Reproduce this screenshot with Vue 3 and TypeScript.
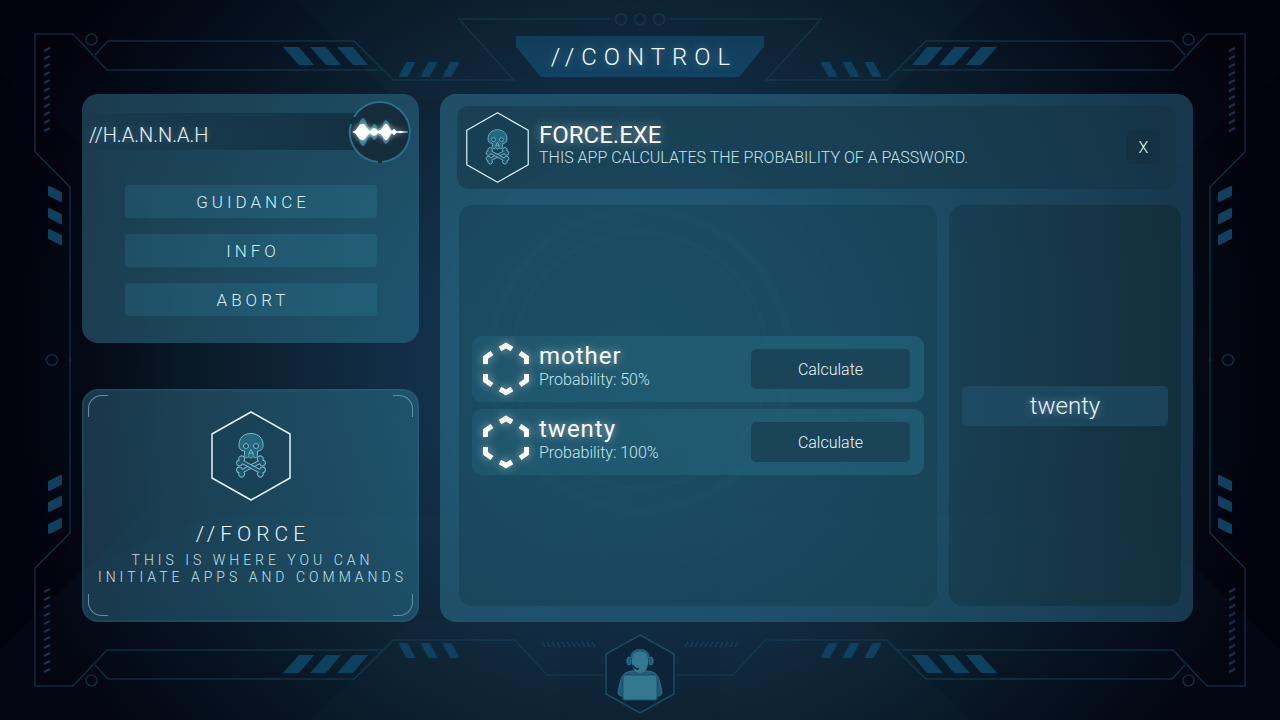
<script setup lang="ts">
import { ref } from 'vue'

interface Guess {
  word: string
  probability: number
}

const menu: string[] = ['GUIDANCE', 'INFO', 'ABORT']
const guesses = ref<Guess[]>([
  { word: 'mother', probability: 50 },
  { word: 'twenty', probability: 100 },
])
const password = ref('twenty')

const corners: string[] = [
  '',
  'translate(1280 0) scale(-1 1)',
  'translate(0 720) scale(1 -1)',
  'translate(1280 720) scale(-1 -1)',
]
const sides: string[] = ['', 'translate(1280 0) scale(-1 1)']
const tickColumns: string[] = [
  'translate(44 48)',
  'translate(1229 48)',
  'translate(44 589)',
  'translate(1229 589)',
]
const segments: string[] = [
  'M18 7 24 3.500 30 7',
  'M38 11 44.500 15.500V22',
  'M44.500 32V38.500L38 43',
  'M30 47 24 50.500 18 47',
  'M10 43 3.500 38.500V32',
  'M3.500 22V15.500L10 11',
]
</script>

<template>
  <div class="screen">
    <svg class="backdrop" viewBox="0 0 1280 720" preserveAspectRatio="none" aria-hidden="true">
      <defs>
        <linearGradient id="fade">
          <stop offset="0" stop-color="#000006" stop-opacity="0.5" />
          <stop offset="1" stop-color="#000006" stop-opacity="0" />
        </linearGradient>
        <symbol id="badge" viewBox="0 0 80 90">
          <path class="badge-edge" d="M40 1 79 23V67L40 89 1 67V23Z" />
          <g class="skull">
            <g transform="translate(40 55.500)">
              <path transform="rotate(-28)" d="M-9-1.600H9A2.900 2.900 0 1 1 13.500 0A2.900 2.900 0 1 1 9 1.600H-9A2.900 2.900 0 1 1-13.500 0A2.900 2.900 0 1 1-9-1.600Z" />
              <path transform="rotate(28)" d="M-9-1.600H9A2.900 2.900 0 1 1 13.500 0A2.900 2.900 0 1 1 9 1.600H-9A2.900 2.900 0 1 1-13.500 0A2.900 2.900 0 1 1-9-1.600Z" />
            </g>
            <path class="head" d="M40 22.500C32 22.500 28 27.500 28 34C28 38 29.500 39.500 33.500 40V44.500C33.500 46 35 47 36.500 46.500L38 45.500 40 47.500 42 45.500 43.500 46.500C45 47 46.500 46 46.500 44.500V40C50.500 39.500 52 38 52 34C52 27.500 48 22.500 40 22.500Z" />
            <circle class="eye" cx="35" cy="35" r="2.500" />
            <circle class="eye" cx="45" cy="35" r="2.500" />
            <path d="M40 38.500 42 42H38ZM38 44.500V42M42 44.500V42" />
          </g>
        </symbol>
        <g id="corner">
          <path class="wire" d="M70 361V187L35 152V34H73L107 70H382M95 55 108 41H354L393 80H430" />
          <circle class="wire" cx="91.500" cy="39.500" r="5.500" />
          <path class="slab" d="M283 47H299L314 65H299ZM310 47H326L341 65H326ZM337 47H353L368 65H353Z" />
          <path class="slab round" d="M407 63H414L407 76H400ZM429 63H436L429 76H422ZM451 63H458L451 76H444Z" />
          <path class="slab round" d="M49 187 61 193V201L49 195ZM49 209 61 215V223L49 217ZM49 230 61 236V244L49 238Z" />
        </g>
      </defs>
      <path class="beam" d="M295 0H985L885 100H395ZM310 720H970L870 620H410Z" />
      <path class="beam" d="M210 516H560V720H0V650L80 570ZM1070 516H720V720H1280V650L1200 570Z" />
      <g v-for="s in sides" :key="s" :transform="s">
        <path fill="url(#fade)" d="M0 73 125 185 180 240V480L140 516 0 650Z" />
        <path class="wire" d="M430 80H514L459 19H610" />
        <path class="wire" d="M430 640H515L547 675H602" />
        <path v-for="n in 11" :key="n" class="tick" :d="`M${537 + n * 5} 642l3 5`" />
      </g>
      <use v-for="c in corners" :key="c" href="#corner" :transform="c" />
      <circle class="wire" cx="52" cy="360" r="5.500" />
      <circle class="wire" cx="1228" cy="360" r="5.500" />
      <circle v-for="x in [621, 640, 659]" :key="x" class="wire" :cx="x" cy="19.500" r="5.500" />
      <g v-for="t in tickColumns" :key="t" :transform="t">
        <path v-for="n in 11" :key="n" class="tick bold" :d="`M0 ${n * 8 - 5}l6 -3`" />
      </g>
    </svg>

    <header class="top">
      <h1>//CONTROL</h1>
    </header>

    <main class="layout">
      <div class="side">
        <section class="panel assistant">
          <div class="assistant-head">
            <h2>//H.A.N.N.A.H</h2>
            <svg class="voice" viewBox="0 0 64 64" aria-hidden="true">
              <circle class="voice-disc" cx="32" cy="32" r="31" />
              <path class="voice-ring" d="M30 62A30 30 0 0 1 3 24M6 17A30 30 0 1 1 34 62" />
              <path class="voice-back" d="M5 32Q9 31 11 24Q15 12 19 24Q22 31 25 25Q27 22 30 29L34 27Q38 13 42 27L44 31Q46 28 48 31H60V33H48Q46 36 44 33L42 37Q38 51 34 37L30 35Q27 42 25 39Q22 33 19 40Q15 52 11 40Q9 33 5 32Z" />
              <path class="voice-wave" d="M4 32Q8 31 10 27Q15 20 19 28L22 31Q26 25 30 31L34 29Q38 19 42 29L44 31Q46 27 48 31L50 31.500Q52 30 55 31.500L60 32L55 32.500Q52 34 50 32.500L48 33Q46 37 44 33L42 35Q38 45 34 35L30 33Q26 39 22 33L19 36Q15 44 10 37Q8 33 4 32Z" />
            </svg>
          </div>
          <nav class="menu" aria-label="Assistant">
            <button v-for="item in menu" :key="item" type="button">{{ item }}</button>
          </nav>
        </section>

        <section class="panel force">
          <i class="bracket tl"></i><i class="bracket tr"></i>
          <i class="bracket bl"></i><i class="bracket br"></i>
          <svg class="force-icon" aria-hidden="true"><use href="#badge" /></svg>
          <h2>//FORCE</h2>
          <p>THIS IS WHERE YOU CAN<br />INITIATE APPS AND COMMANDS</p>
        </section>
      </div>

      <section class="panel app">
        <svg class="rings" viewBox="0 0 753 528" preserveAspectRatio="xMidYMid slice" aria-hidden="true">
          <circle cx="200" cy="266" r="210" class="ring-fill" />
          <circle cx="200" cy="266" r="150" class="ring-line" />
          <circle cx="200" cy="266" r="128" class="ring-line thin" />
        </svg>
        <div class="app-head">
          <svg class="app-icon" aria-hidden="true"><use href="#badge" /></svg>
          <div class="app-title">
            <h2>FORCE.EXE</h2>
            <p>THIS APP CALCULATES THE PROBABILITY OF A PASSWORD.</p>
          </div>
          <button class="close" type="button" aria-label="Close">X</button>
        </div>
        <div class="app-body">
          <ul class="box guesses">
            <li v-for="g in guesses" :key="g.word">
              <svg class="loader" viewBox="0 0 48 54" aria-hidden="true">
                <path v-for="d in segments" :key="d" :d="d" />
              </svg>
              <div class="guess">
                <h3>{{ g.word }}</h3>
                <p>Probability: {{ g.probability }}%</p>
              </div>
              <button type="button">Calculate</button>
            </li>
          </ul>
          <div class="box entry">
            <input v-model="password" type="text" aria-label="Password" />
          </div>
        </div>
      </section>
    </main>

    <footer class="bottom">
      <svg class="operator" viewBox="0 0 70 80" aria-hidden="true">
        <path class="op-edge" d="M35 1 69 20V60L35 79 1 60V20Z" />
        <path class="op-body" d="M27 37H43Q52 38 54 45L57 58Q57 61 54 62H16Q13 61 13 58L16 45Q18 38 27 37Z" />
        <path class="op-face" d="M27 23Q28 17 35 17T43 23V30Q42 39 35 39T27 30Z" />
        <path class="op-band" d="M26 24Q27 16 35 16T44 24" />
        <rect class="op-ear" x="22" y="23" width="4" height="8" rx="2" />
        <rect class="op-ear" x="44" y="23" width="4" height="8" rx="2" />
        <path class="op-mic" d="M28 31Q29 35 34 35" />
        <rect class="op-laptop" x="18" y="41" width="34" height="25" rx="1" />
      </svg>
    </footer>
  </div>
</template>

<style>
body {
  margin: 0;
  background: #02030d;
}
</style>

<style scoped>
.screen {
  position: relative;
  display: flex;
  flex-direction: column;
  min-height: 100vh;
  box-sizing: border-box;
  overflow: hidden;
  color: #e4f6fb;
  font-family: Roboto, 'Liberation Sans', sans-serif;
  font-weight: 300;
  background: radial-gradient(ellipse 52% 84% at 50% 50%, #15405a 0%, #12304a 33%, #0d2030 58%, #050e1c 82%, #02030d 100%);
}
h1, h2, h3, p, ul {
  margin: 0;
  padding: 0;
  font-weight: 300;
}
button, input {
  border: 0;
  padding: 0;
  color: inherit;
  font: inherit;
  box-sizing: border-box;
}
button {
  cursor: pointer;
}
.backdrop {
  position: absolute;
  inset: 0;
  width: 100%;
  height: 100%;
}
.wire {
  fill: none;
  stroke: #153f57;
  stroke-width: 1.5;
  opacity: 0.65;
}
.slab {
  fill: #0e4160;
}
.slab.round {
  stroke: #0e4160;
  stroke-width: 2;
  stroke-linejoin: round;
}
.tick {
  stroke: #14405a;
  stroke-width: 1.5;
}
.tick.bold {
  stroke: #10334d;
  stroke-width: 2;
}
.beam {
  fill: rgba(70, 130, 160, 0.03);
}
.top {
  position: relative;
  display: flex;
  justify-content: center;
  height: 94px;
  padding-top: 36px;
  box-sizing: border-box;
}
h1 {
  width: 248px;
  height: 41px;
  box-sizing: border-box;
  padding-left: 8px;
  font-size: 24px;
  line-height: 42px;
  letter-spacing: 7px;
  text-align: center;
  white-space: nowrap;
  color: #eefaff;
  text-shadow: 0 0 10px rgba(220, 240, 255, 0.4);
  background: linear-gradient(#123d59, #124364);
  clip-path: polygon(0 0, 100% 0, 100% 26%, 90% 100%, 10% 100%, 0 26%);
}
.layout {
  position: relative;
  flex: 1;
  display: grid;
  grid-template-columns: 337fr 753fr;
  gap: 21px;
  padding: 0 87px 0 82px;
}
.side {
  display: grid;
  grid-template-rows: 249fr 233fr;
  gap: 46px;
}
.panel {
  position: relative;
  border-radius: 16px;
  box-sizing: border-box;
  background: linear-gradient(100deg, rgba(52, 112, 138, 0.5), rgba(42, 118, 146, 0.5));
}
.assistant {
  padding-top: 7px;
}
.assistant-head {
  display: flex;
  align-items: center;
  justify-content: space-between;
  height: 62px;
  padding: 0 7px;
  background: linear-gradient(90deg, rgba(14, 38, 54, 0.1), rgba(14, 38, 54, 0.75)) 0 12px / 300px 37px no-repeat;
}
.assistant-head h2 {
  font-size: 20px;
  line-height: 24px;
  padding-top: 5px;
  text-shadow: 0 0 6px rgba(220, 240, 255, 0.3);
}
.voice {
  width: 64px;
  height: 64px;
}
.voice-disc {
  fill: #142c3c;
}
.voice-ring {
  fill: none;
  stroke: #2a7088;
  stroke-width: 2;
}
.voice-back {
  fill: #32788c;
}
.voice-wave {
  fill: #fff;
  filter: drop-shadow(0 0 3px rgba(255, 255, 255, 0.7));
}
.menu {
  display: grid;
  gap: 16px;
  padding: 22px 42px 0 43px;
}
.menu button {
  height: 33px;
  border-radius: 4px;
  padding-left: 4px;
  font-size: 17px;
  letter-spacing: 4px;
  color: #d3eef6;
  background: linear-gradient(90deg, rgba(40, 118, 146, 0.28), rgba(38, 116, 138, 0.4));
}
.force {
  display: flex;
  flex-direction: column;
  align-items: center;
  padding-top: 22px;
  background: linear-gradient(100deg, rgba(52, 112, 138, 0.44), rgba(42, 118, 146, 0.5));
  box-shadow: inset 0 0 0 2px rgba(50, 120, 145, 0.2);
}
.force h2 {
  margin-top: 21px;
  padding-left: 5px;
  font-size: 21px;
  line-height: 24px;
  letter-spacing: 5px;
}
.force p {
  margin-top: 6px;
  padding-left: 4px;
  font-size: 14px;
  line-height: 17px;
  letter-spacing: 4px;
  text-align: center;
  white-space: nowrap;
  color: #c0e0ea;
}
.force-icon {
  width: 80px;
  height: 90px;
}
.badge-edge {
  fill: rgba(20, 60, 84, 0.35);
  stroke: #e2f4fa;
  stroke-width: 1.5;
  stroke-linejoin: round;
}
.skull {
  fill: #1f546c;
  stroke: #7db8c8;
  stroke-width: 1;
  stroke-linejoin: round;
}
.skull .head {
  fill: #23697f;
}
.skull .eye {
  fill: #1d465f;
}
.bracket {
  position: absolute;
  width: 20px;
  height: 22px;
  box-sizing: border-box;
  border: 0 solid #5a93a8;
}
.tl { top: 6px; left: 6px; border-width: 1px 0 0 1px; border-top-left-radius: 14px; }
.tr { top: 6px; right: 6px; border-width: 1px 1px 0 0; border-top-right-radius: 14px; }
.bl { bottom: 6px; left: 6px; border-width: 0 0 1px 1px; border-bottom-left-radius: 14px; }
.br { bottom: 6px; right: 6px; border-width: 0 1px 1px 0; border-bottom-right-radius: 14px; }
.app {
  display: flex;
  flex-direction: column;
  gap: 16px;
  padding: 12px 12px 16px 17px;
  background: linear-gradient(90deg, rgba(48, 120, 148, 0.5), rgba(44, 118, 148, 0.48) 60%, rgba(44, 106, 136, 0.48));
}
.rings {
  position: absolute;
  inset: 0;
  width: 100%;
  height: 100%;
}
.ring-fill {
  fill: rgba(60, 150, 180, 0.04);
}
.ring-line {
  fill: none;
  stroke: rgba(80, 170, 190, 0.05);
  stroke-width: 8;
}
.ring-line.thin {
  stroke-width: 3;
}
.app-head {
  position: relative;
  display: flex;
  align-items: center;
  height: 83px;
  margin-right: 5px;
  padding: 0 16px 0 9px;
  box-sizing: border-box;
  border-radius: 12px;
  background: rgba(20, 50, 64, 0.5);
}
.app-icon {
  width: 63px;
  height: 71px;
}
.app-title {
  flex: 1;
  padding: 0 0 6px 10px;
}
.app-title h2 {
  font-size: 24px;
  line-height: 26px;
  font-weight: 400;
  color: #fff;
  text-shadow: 0 0 12px rgba(230, 240, 250, 0.6);
}
.app-title p {
  font-size: 16px;
  line-height: 20px;
  color: #c4e2ec;
}
.close {
  width: 33px;
  height: 33px;
  border-radius: 5px;
  font-size: 16px;
  background: rgba(18, 42, 56, 0.4);
}
.app-body {
  position: relative;
  flex: 1;
  display: grid;
  grid-template-columns: 478fr 232fr;
  gap: 12px;
  padding-left: 2px;
}
.box {
  display: flex;
  flex-direction: column;
  justify-content: center;
  gap: 7px;
  padding: 0 13px;
  border-radius: 14px;
  background: rgba(20, 60, 78, 0.48);
}
.entry {
  background: linear-gradient(90deg, rgba(20, 52, 68, 0.52), rgba(18, 42, 52, 0.66));
}
.guesses li {
  display: flex;
  align-items: center;
  height: 66px;
  padding: 0 14px 0 10px;
  box-sizing: border-box;
  border-radius: 10px;
  background: linear-gradient(90deg, rgba(40, 112, 136, 0.3), rgba(40, 118, 140, 0.42));
}
.loader {
  width: 48px;
  height: 54px;
  overflow: visible;
  filter: drop-shadow(0 0 5px rgba(235, 235, 235, 0.6));
}
.loader path {
  fill: none;
  stroke: #fff;
  stroke-width: 5;
}
.guess {
  flex: 1;
  padding: 0 0 6px 9px;
}
.guess h3 {
  font-size: 24px;
  line-height: 28px;
  font-weight: 400;
  letter-spacing: 1px;
  color: #fff;
  text-shadow: 0 0 10px rgba(235, 240, 245, 0.6);
}
.guess p {
  font-size: 16px;
  line-height: 20px;
  color: #c4e6ef;
}
.guesses button {
  width: 159px;
  height: 40px;
  border-radius: 5px;
  font-size: 16px;
  background: rgba(24, 60, 78, 0.7);
}
.entry input {
  width: 100%;
  height: 40px;
  border-radius: 5px;
  font-size: 24px;
  text-align: center;
  outline: none;
  text-shadow: 0 0 10px rgba(235, 240, 245, 0.5);
  background: rgba(34, 86, 116, 0.5);
}
.bottom {
  position: relative;
  display: flex;
  justify-content: center;
  height: 98px;
  padding-top: 12px;
  box-sizing: border-box;
}
.operator {
  width: 70px;
  height: 80px;
}
.op-edge {
  fill: #0d2438;
  stroke: #1b4a62;
  stroke-width: 1.5;
}
.op-body, .op-ear {
  fill: #215a73;
  stroke: #2c7088;
}
.op-band {
  fill: none;
  stroke: #265f78;
  stroke-width: 2;
}
.op-face, .op-laptop {
  fill: #32788f;
}
.op-laptop {
  stroke: #1d5067;
}
.op-mic {
  fill: none;
  stroke: #10283c;
  stroke-width: 1.5;
}
</style>
